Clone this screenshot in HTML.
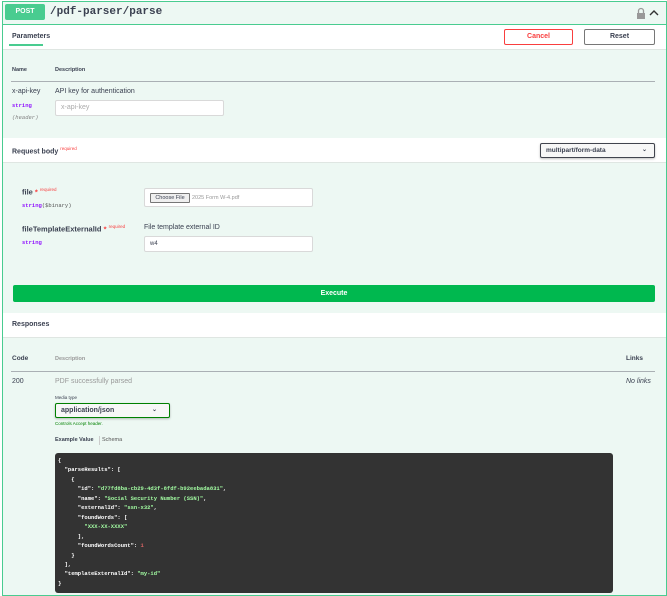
<!DOCTYPE html><html><head><style>
*{box-sizing:border-box;margin:0;padding:0}
body{width:667px;height:591px;overflow:hidden;background:#fff;font-family:"Liberation Sans",sans-serif;color:#3b4151;position:relative}
.a{position:absolute;white-space:nowrap}
.mono{font-family:"Liberation Mono",monospace}
.b{font-weight:bold}
</style></head><body>
<div class="a" style="left:2px;top:1px;width:665px;height:595px;border:1px solid #49cc90;background:#edf8f3"></div>
<div class="a" style="left:3px;top:24px;width:663px;height:1px;background:#49cc90"></div>
<div class="a" style="left:5px;top:4px;width:40px;height:16px;background:#49cc90;border-radius:2px;color:#fff;font-size:7px;font-weight:bold;text-align:center;line-height:16px">POST</div>
<div class="a mono b" style="left:50px;top:6px;font-size:11px;line-height:13px;color:#3b4151">/pdf-parser/parse</div>
<svg class="a" style="left:636px;top:7px" width="10" height="12" viewBox="0 0 10 12"><path d="M2.5 6V4a2.5 2.5 0 0 1 5 0v2" fill="none" stroke="#999" stroke-width="1.3"/><rect x="1" y="6" width="8" height="6" fill="#999"/></svg>
<svg class="a" style="left:649px;top:9px" width="10" height="7" viewBox="0 0 10 7"><path d="M1 6L5 2L9 6" fill="none" stroke="#333" stroke-width="1.4"/></svg>
<div class="a" style="left:3px;top:25px;width:663px;height:25px;background:#fff;border-bottom:1px solid #dfe6e2"></div>
<div class="a b" style="left:12px;top:33px;font-size:7px">Parameters</div>
<div class="a" style="left:9px;top:44px;width:34px;height:2px;background:#49cc90"></div>
<div class="a b" style="left:504px;top:29px;width:69px;height:16px;border:1px solid #f93e3e;border-radius:2px;color:#f93e3e;font-size:7px;text-align:center;line-height:14px;background:#fff">Cancel</div>
<div class="a b" style="left:584px;top:29px;width:71px;height:16px;border:1px solid #777;border-radius:2px;font-size:7px;text-align:center;line-height:14px;background:#fff">Reset</div>
<div class="a b" style="left:12px;top:67px;font-size:5.5px">Name</div>
<div class="a b" style="left:55px;top:67px;font-size:5.5px">Description</div>
<div class="a" style="left:11px;top:81px;width:644px;height:1px;background:#aab0b4"></div>
<div class="a" style="left:12px;top:88px;font-size:7px">x-api-key</div>
<div class="a mono b" style="left:12px;top:102px;font-size:5.5px;color:#9012fe">string</div>
<div class="a mono" style="left:12px;top:114px;font-size:5.5px;color:#808080;font-style:italic">(header)</div>
<div class="a" style="left:55px;top:88px;font-size:7px">API key for authentication</div>
<div class="a" style="left:55px;top:100px;width:169px;height:16px;border:1px solid #d9d9d9;border-radius:2px;background:#fff;font-size:7px;color:#aaa;padding-left:5px;line-height:14px">x-api-key</div>
<div class="a" style="left:3px;top:138px;width:663px;height:25px;background:#fff;border-bottom:1px solid #dfe6e2"></div>
<div class="a b" style="left:12px;top:146px;font-size:7px">Request body <sup style="color:#f93e3e;font-size:4.5px;font-weight:normal">required</sup></div>
<div class="a b" style="left:540px;top:143px;width:115px;height:15px;border:1px solid #41444e;border-radius:2px;background:#f7f7f7;font-size:6.5px;line-height:13px;padding-left:5px;box-shadow:0 1px 2px rgba(0,0,0,.25)">multipart/form-data<span style="position:absolute;right:7px;font-size:6px">⌄</span></div>
<div class="a b" style="left:22px;top:187px;font-size:7.5px">file <span style="color:#f93e3e">*</span> <sup style="color:#f93e3e;font-size:4.5px;font-weight:normal">required</sup></div>
<div class="a mono b" style="left:22px;top:202px;font-size:5.5px;color:#9012fe">string<span style="color:#555;font-weight:normal">($binary)</span></div>
<div class="a" style="left:144px;top:188px;width:169px;height:19px;border:1px solid #d9d9d9;border-radius:2px;background:#fff"></div>
<div class="a" style="left:150px;top:193px;width:40px;height:10px;border:1px solid #767676;background:#efefef;font-size:5.5px;text-align:center;line-height:8px;border-radius:1px">Choose File</div>
<div class="a" style="left:192px;top:195px;font-size:5.5px;color:#999">2025 Form W-4.pdf</div>
<div class="a b" style="left:22px;top:224px;font-size:7.5px">fileTemplateExternalId <span style="color:#f93e3e">*</span> <sup style="color:#f93e3e;font-size:4.5px;font-weight:normal">required</sup></div>
<div class="a mono b" style="left:22px;top:239px;font-size:5.5px;color:#9012fe">string</div>
<div class="a" style="left:144px;top:224px;font-size:7px">File template external ID</div>
<div class="a" style="left:144px;top:236px;width:169px;height:16px;border:1px solid #d9d9d9;border-radius:2px;background:#fff;font-size:6px;padding-left:5px;line-height:14px">w4</div>
<div class="a b" style="left:13px;top:285px;width:642px;height:17px;background:#00b84f;border-radius:2px;color:#fff;font-size:7px;text-align:center;line-height:17px">Execute</div>
<div class="a" style="left:3px;top:313px;width:663px;height:25px;background:#fff;border-bottom:1px solid #dfe6e2"></div>
<div class="a b" style="left:12px;top:321px;font-size:7px">Responses</div>
<div class="a b" style="left:12px;top:355px;font-size:6.5px">Code</div>
<div class="a b" style="left:55px;top:356px;font-size:5.5px;color:#999">Description</div>
<div class="a b" style="left:626px;top:355px;font-size:6.5px">Links</div>
<div class="a" style="left:11px;top:371px;width:644px;height:1px;background:#aab0b4"></div>
<div class="a" style="left:12px;top:378px;font-size:7px">200</div>
<div class="a" style="left:55px;top:378px;font-size:7px;color:#999">PDF successfully parsed</div>
<div class="a" style="left:626px;top:378px;font-size:7px;font-style:italic">No links</div>
<div class="a" style="left:55px;top:395px;font-size:4.5px">Media type</div>
<div class="a b" style="left:55px;top:403px;width:115px;height:15px;border:1px solid #008000;border-radius:2px;background:#f7f7f7;font-size:7px;line-height:13px;padding-left:5px;box-shadow:0 1px 2px rgba(0,0,0,.25)">application/json<span style="position:absolute;right:12px;font-size:6px">⌄</span></div>
<div class="a" style="left:55px;top:421px;font-size:4.5px;color:#008000">Controls Accept header.</div>
<div class="a b" style="left:55px;top:437px;font-size:5.5px">Example Value</div>
<div class="a" style="left:99px;top:436px;width:1px;height:9px;background:#ccc"></div>
<div class="a" style="left:102px;top:437px;font-size:5.5px;color:#555">Schema</div>
<div class="a" style="left:55px;top:453px;width:558px;height:140px;background:#333;border-radius:3px"></div>
<pre class="a mono b" style="left:58px;top:456px;font-size:5.5px;line-height:9.45px;color:#fff;white-space:pre">{
  "parseResults": [
    {
      "id": <span style="color:#a2fca2">"d77fd8ba-cb29-4d3f-8fdf-b92eebada831"</span>,
      "name": <span style="color:#a2fca2">"Social Security Number (SSN)"</span>,
      "externalId": <span style="color:#a2fca2">"ssn-x32"</span>,
      "foundWords": [
        <span style="color:#a2fca2">"XXX-XX-XXXX"</span>
      ],
      "foundWordsCount": <span style="color:#d36363">1</span>
    }
  ],
  "templateExternalId": <span style="color:#a2fca2">"my-id"</span>
}</pre>
</body></html>
